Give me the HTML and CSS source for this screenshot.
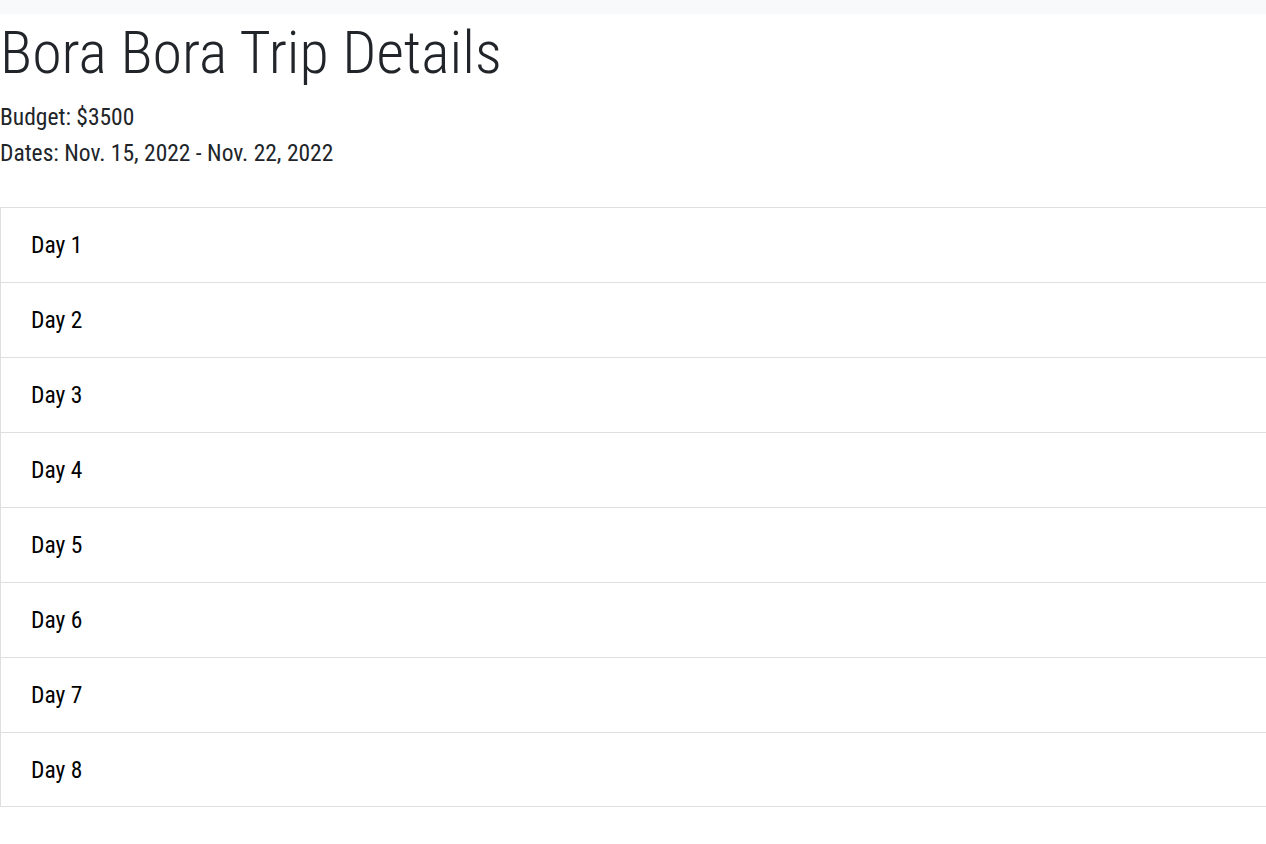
FILE: index.html
```html
<!DOCTYPE html>
<html lang="en">
<head>
<meta charset="utf-8">
<title>Bora Bora Trip Details</title>
<link rel="stylesheet" href="styles.css">
</head>
<body>
<div class="topbar"></div>
<main class="trip">
  <h1 class="title">Bora Bora Trip Details</h1>
  <div class="info">
    <p class="meta">Budget: $3500</p>
    <p class="meta">Dates: Nov. 15, 2022 - Nov. 22, 2022</p>
  </div>
  <ul class="days">
    <li class="day">Day 1</li>
    <li class="day">Day 2</li>
    <li class="day">Day 3</li>
    <li class="day">Day 4</li>
    <li class="day">Day 5</li>
    <li class="day">Day 6</li>
    <li class="day">Day 7</li>
    <li class="day">Day 8</li>
  </ul>
</main>
</body>
</html>
```
FILE: styles.css
```css
html, body {
  margin: 0;
  padding: 0;
  background: #fff;
}
body {
  font-family: Roboto, "Liberation Sans", sans-serif;
  font-stretch: condensed;
  color: #212529;
  overflow-x: hidden;
}
.topbar {
  height: 14px;
  background: #f8f9fa;
}
.title {
  margin: 0;
  font-size: 60px;
  font-weight: 300;
  line-height: 77px;
}
.info {
  margin-top: 8px;
}
.meta {
  margin: 0;
  font-size: 23.5px;
  line-height: 36px;
}
.days {
  list-style: none;
  margin: 36px -20px 0 0;
  padding: 0;
  border-left: 1px solid #dfdfdf;
}
.day {
  box-sizing: border-box;
  height: 75px;
  border-top: 1px solid #dfdfdf;
  padding-left: 30px;
  display: flex;
  align-items: center;
  font-size: 23.5px;
  color: #000;
}
.day:last-child {
  border-bottom: 1px solid #dfdfdf;
}
```
